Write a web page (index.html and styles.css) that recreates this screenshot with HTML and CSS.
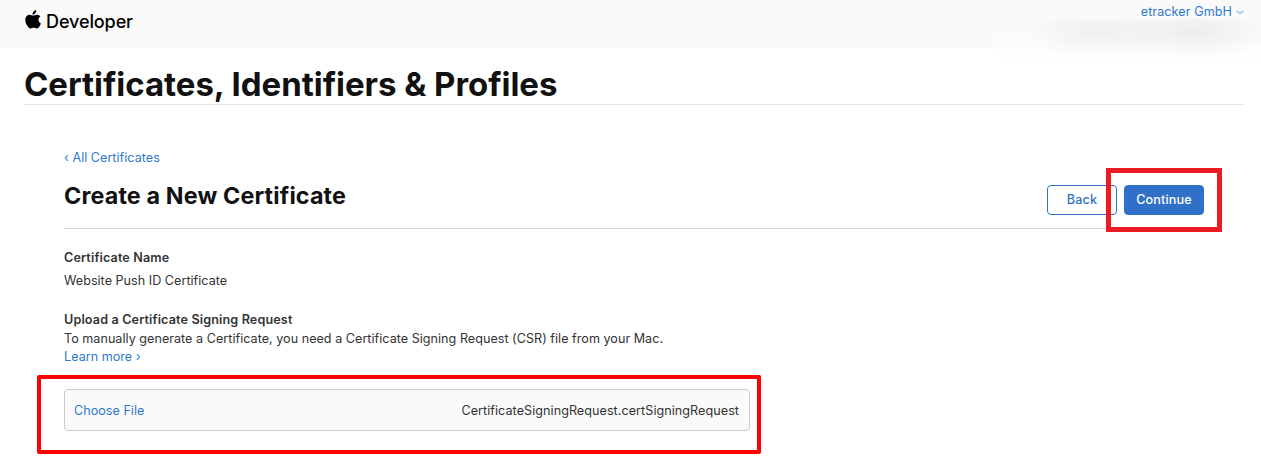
FILE: index.html
```html
<!DOCTYPE html>
<html lang="en">
<head>
    <meta charset="UTF-8">
    <meta name="viewport" content="width=device-width, initial-scale=1.0">
    <title>Certificates, Identifiers &amp; Profiles</title>
    <link rel="stylesheet" href="styles.css">
</head>
<body>
    <header class="header">
        <a class="logo" href="#">
            <svg class="logo-icon" viewBox="0 0 16 19" width="16" height="19">
                <path d="M11.2 0c.2 1.2-.3 2.4-1 3.300-.7.9-1.700 1.500-2.700 1.400-.1-1.200.4-2.400 1.100-3.200C9.300.7 10.300.1 11.200 0z"/>
                <path d="M15.400 6.500c-1.100.7-1.900 1.700-1.900 3.200 0 1.700 1 3.100 2.400 3.700-.4 1.200-1 2.300-1.700 3.300-.7 1-1.400 1.800-2.500 1.800s-1.600-.7-3-.7-2 .7-3.100.7c-1.100 0-1.900-.9-2.700-2C1.300 14.800.3 12.500.3 10.100c0-3.300 2-5.400 4.300-5.400 1.400 0 2.500.9 3.500.9s2.300-1 4-.9c1.300 0 2.500.6 3.300 1.800z"/>
            </svg>
            <span class="logo-text">Developer</span>
        </a>
        <div class="account">
            <a class="team" href="#">etracker GmbH</a>
            <svg class="team-arrow" viewBox="0 0 8 5" width="8" height="5">
                <path d="M.7.8 4 3.800 7.300.8"/>
            </svg>
        </div>
        <div class="account-blur"></div>
    </header>

    <main class="page">
        <h1 class="page-title">Certificates, Identifiers &amp; Profiles</h1>

        <section class="content">
            <a class="back-link" href="#">‹ All Certificates</a>

            <div class="toolbar">
                <h2 class="toolbar-title">Create a New Certificate</h2>
                <div class="toolbar-buttons">
                    <button class="btn">Back</button>
                    <div class="highlighted">
                        <button class="btn btn-primary">Continue</button>
                        <div class="mark mark-continue"></div>
                    </div>
                </div>
            </div>

            <h3 class="label">Certificate Name</h3>
            <p class="text cert-name">Website Push ID Certificate</p>

            <h3 class="label">Upload a Certificate Signing Request</h3>
            <p class="text csr-text">To manually generate a Certificate, you need a Certificate Signing Request (CSR) file from your Mac.</p>
            <a class="learn-more" href="#">Learn more ›</a>

            <div class="highlighted upload-wrap">
                <div class="upload">
                    <a class="choose-file" href="#">Choose File</a>
                    <span class="file-name">CertificateSigningRequest.certSigningRequest</span>
                </div>
                <div class="mark mark-upload"></div>
            </div>
        </section>
    </main>
</body>
</html>
```

FILE: styles.css
```css
body {
    margin: 0;
    min-height: 100vh;
    background: #fff;
    color: #333;
    font-family: Inter, "Liberation Sans", sans-serif;
    font-size: 12.6px;
    line-height: 18px;
    letter-spacing: 0.02px;
}

h1, h2, h3, p {
    margin: 0;
}

a {
    color: #2f78cf;
    text-decoration: none;
}

.header {
    position: relative;
    display: flex;
    justify-content: space-between;
    align-items: flex-start;
    height: 48px;
    padding: 0 17px 0 25px;
    box-sizing: border-box;
    background: #fafafa;
}

.logo {
    display: flex;
    gap: 5px;
    padding-top: 10px;
    color: #000;
}

.logo-text {
    font-size: 18px;
    font-weight: 500;
    line-height: 24px;
    letter-spacing: -0.1px;
}

.account {
    display: flex;
    align-items: center;
    gap: 4px;
    padding-top: 3px;
}

.team {
    letter-spacing: 0.08px;
}

.team-arrow {
    fill: none;
    stroke: #8ab9e8;
    stroke-width: 1.2;
}

/* blurred user name under the team */
.account-blur {
    position: absolute;
    top: 19px;
    right: 0;
    width: 262px;
    height: 45px;
    background:
        radial-gradient(ellipse 75px 28px at 100px 13px, rgba(0, 0, 0, 0.045), transparent),
        radial-gradient(ellipse 75px 28px at 195px 13px, rgba(0, 0, 0, 0.055), transparent),
        linear-gradient(#fafafa 30%, #fff);
}

.page {
    padding: 0 17px 0 24px;
}

.page-title {
    padding-top: 16px;
    border-bottom: 1px solid #e3e3e3;
    color: #111;
    font-size: 33px;
    font-weight: 700;
    line-height: 40px;
    letter-spacing: -0.04px;
}

.content {
    display: flex;
    flex-direction: column;
    align-items: flex-start;
    padding: 44px 40px 0;
}

.toolbar {
    display: flex;
    justify-content: space-between;
    align-self: stretch;
    height: 62px;
    border-bottom: 1px solid #d6d6d6;
    box-sizing: border-box;
    margin-bottom: 20px;
}

.toolbar-title {
    padding-top: 13px;
    color: #111;
    font-size: 23.3px;
    font-weight: 700;
    line-height: 32px;
    letter-spacing: 0.15px;
}

.toolbar-buttons {
    display: flex;
    gap: 7px;
    padding-top: 18px;
}

.btn {
    display: block;
    width: 70px;
    height: 30px;
    padding: 0 0 1px;
    border: 1px solid #3070c9;
    border-radius: 4px;
    box-sizing: border-box;
    background: #fff;
    color: #3070c9;
    font-family: inherit;
    font-size: 12.6px;
    font-weight: 500;
    letter-spacing: 0.15px;
    cursor: pointer;
}

.btn-primary {
    width: 80px;
    background: #3070c9;
    color: #fff;
}

.label {
    font-size: 12.6px;
    font-weight: 600;
    line-height: 18px;
    letter-spacing: 0.14px;
}

.cert-name {
    margin: 5px 0 21px;
}

.csr-text {
    margin-top: 1px;
}

.highlighted {
    position: relative;
}

.upload-wrap {
    margin-top: 23px;
}

.upload {
    display: flex;
    justify-content: space-between;
    align-items: center;
    width: 686px;
    height: 42px;
    padding: 2px 10px 0 9px;
    border: 1px solid #ccc;
    border-radius: 4px;
    box-sizing: border-box;
    background: #fafafa;
}

.file-name {
    letter-spacing: 0.05px;
}

/* red frames over the page */
.mark {
    position: absolute;
    box-sizing: border-box;
    pointer-events: none;
}

.mark-continue {
    top: -17px;
    left: -18px;
    width: 116px;
    height: 64px;
    border: 5px solid #ed1c24;
}

.mark-upload {
    top: -14px;
    left: -27px;
    width: 724px;
    height: 79px;
    border: 4px solid #f00;
    border-radius: 2px;
}
```
